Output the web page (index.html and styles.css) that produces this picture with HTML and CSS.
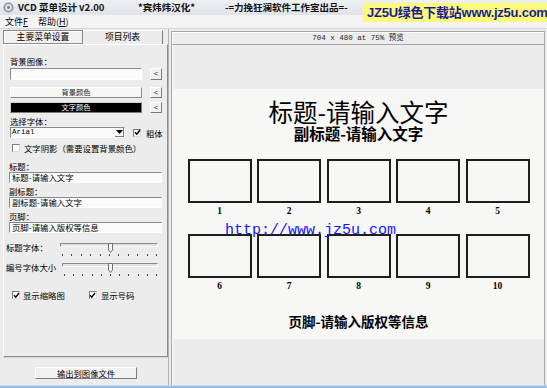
FILE: index.html
```html
<!DOCTYPE html>
<html>
<head>
<meta charset="utf-8">
<title>VCD 菜单设计 v2.00</title>
<link rel="stylesheet" href="styles.css">
</head>
<body>
<div class="window">
  <div class="titlebar">
    <svg class="app-icon" width="11" height="11" viewBox="0 0 11 11"><circle cx="5.5" cy="5.5" r="5" fill="#8e949b"/><circle cx="5.5" cy="5.5" r="3.4" fill="#dde1e5"/><circle cx="5.5" cy="5.5" r="1.3" fill="#666b71"/></svg>
    <span class="title">VCD 菜单设计 v2.00</span>
    <span class="credit1">*宾炜炜汉化*</span>
    <span class="credit2">-=力挽狂澜软件工作室出品=-</span>
  </div>
  <div class="menubar"><span>文件<u>F</u></span><span>帮助(<u>H</u>)</span></div>
  <div class="body">
    <div class="left">
      <div class="tabs"><div class="tab active">主要菜单设置</div><div class="tab">项目列表</div></div>
      <div class="tabpage">
        <div class="label">背景图像：</div>
        <div class="row r-img"><div class="field wide"></div><div class="pick">&lt;</div></div>
        <div class="row r-bg"><div class="colorbtn light">背景颜色</div><div class="pick">&lt;</div></div>
        <div class="row r-fg"><div class="colorbtn dark">文字颜色</div><div class="pick">&lt;</div></div>
        <div class="label l-font">选择字体：</div>
        <div class="row r-font">
          <div class="select"><span class="sel-text">Arial</span><span class="sel-arrow"><svg width="7" height="4" viewBox="0 0 7 4"><path d="M0 0 H7 L3.5 4 Z" fill="#000"/></svg></span></div>
          <div class="check c-bold"><span class="box"><svg width="7" height="7" viewBox="0 0 7 7"><path d="M1 3.2 L2.8 5.2 L6 1" stroke="#000" stroke-width="1.4" fill="none"/></svg></span><span>粗体</span></div>
        </div>
        <div class="row r-shadow"><div class="check"><span class="box"></span><span>文字阴影（需要设置背景颜色）</span></div></div>
        <div class="label l-title">标题：</div>
        <div class="field text">标题-请输入文字</div>
        <div class="label l-sub">副标题：</div>
        <div class="field text">副标题-请输入文字</div>
        <div class="label l-sub">页脚：</div>
        <div class="field text">页脚-请输入版权等信息</div>
        <div class="slider-row s1">
          <span class="s-label">标题字体：</span>
          <div class="slider">
            <div class="track"></div>
            <svg class="thumb" width="5" height="10" viewBox="0 0 5 10"><path d="M0.5 0.5 H4.5 V7 L2.5 9.5 L0.5 7 Z" fill="#f4f4f4" stroke="#6f6f6f"/></svg>
            <div class="ticks"><i></i><i></i><i></i><i></i><i></i><i></i><i></i><i></i><i></i><i></i><i></i></div>
          </div>
        </div>
        <div class="slider-row s2">
          <span class="s-label">编号字体大小</span>
          <div class="slider">
            <div class="track"></div>
            <svg class="thumb" width="5" height="10" viewBox="0 0 5 10"><path d="M0.5 0.5 H4.5 V7 L2.5 9.5 L0.5 7 Z" fill="#f4f4f4" stroke="#6f6f6f"/></svg>
            <div class="ticks"><i></i><i></i><i></i><i></i><i></i><i></i><i></i><i></i><i></i><i></i><i></i></div>
          </div>
        </div>
        <div class="row r-checks">
          <div class="check c-thumb"><span class="box"><svg width="7" height="7" viewBox="0 0 7 7"><path d="M1 3.2 L2.8 5.2 L6 1" stroke="#000" stroke-width="1.4" fill="none"/></svg></span><span>显示缩略图</span></div>
          <div class="check c-num"><span class="box"><svg width="7" height="7" viewBox="0 0 7 7"><path d="M1 3.2 L2.8 5.2 L6 1" stroke="#000" stroke-width="1.4" fill="none"/></svg></span><span>显示号码</span></div>
        </div>
      </div>
      <div class="export"><div class="export-btn">输出到图像文件</div></div>
    </div>
    <div class="right">
      <div class="preview-head">704 x 480 at 75% 预览</div>
      <div class="preview">
        <div class="pv-top"></div>
        <div class="canvas">
          <div class="big-title">标题-请输入文字</div>
          <div class="sub-title">副标题-请输入文字</div>
          <div class="grid">
            <div class="cell"><div class="frame"></div><div class="num">1</div></div>
            <div class="cell"><div class="frame"></div><div class="num">2</div></div>
            <div class="cell"><div class="frame"></div><div class="num">3</div></div>
            <div class="cell"><div class="frame"></div><div class="num">4</div></div>
            <div class="cell"><div class="frame"></div><div class="num">5</div></div>
            <div class="cell"><div class="frame"></div><div class="num">6</div></div>
            <div class="cell"><div class="frame"></div><div class="num">7</div></div>
            <div class="cell"><div class="frame"></div><div class="num">8</div></div>
            <div class="cell"><div class="frame"></div><div class="num">9</div></div>
            <div class="cell"><div class="frame"></div><div class="num">10</div></div>
          </div>
          <div class="footer-text">页脚-请输入版权等信息</div>
        </div>
        <div class="pv-bottom"></div>
      </div>
    </div>
  </div>
  <div class="bottom-edge"></div>
  <div class="watermark">JZ5U绿色下载站www.jz5u.com</div>
  <div class="url-mark">http://www.jz5u.com</div>
</div>
</body>
</html>
```
FILE: styles.css
```css
* { box-sizing: border-box; }
html, body { margin: 0; padding: 0; }
body {
  width: 547px;
  height: 388px;
  overflow: hidden;
  background: #ececec;
  font-family: "Noto Sans CJK SC", sans-serif;
  font-size: 8.4px;
  color: #000;
}
.window {
  position: relative;
  width: 547px;
  height: 388px;
  display: flex;
  flex-direction: column;
}
/* title bar */
.titlebar {
  height: 15px;
  display: flex;
  align-items: center;
  background: linear-gradient(#eef1f4, #dfe3e8);
  font-weight: bold;
  font-size: 9.5px;
  line-height: 15px;
  color: #111;
  white-space: nowrap;
}
.app-icon { margin-left: 3px; margin-right: 4px; flex: none; }
.title { width: 120px; flex: none; }
.credit1 { width: 87px; flex: none; }
.credit2 { flex: none; }
.watermark {
  position: absolute;
  left: 363px;
  top: 3px;
  width: 184px;
  height: 19px;
  padding-left: 4px;
  background: #fbfb78;
  color: #1b1b9a;
  font: bold 13px "Liberation Sans", "Noto Sans CJK SC", sans-serif;
  letter-spacing: -0.25px;
  line-height: 19px;
  white-space: nowrap;
}
/* menu */
.menubar {
  height: 14px;
  display: flex;
  align-items: center;
  gap: 10px;
  padding-left: 5px;
  background: #f4f4f4;
  border-bottom: 1px solid #d6d6d6;
  font-size: 9px;
  line-height: 13px;
}
.menubar u { text-decoration: underline; }
/* body */
.body { height: 356px; display: flex; }
.left { width: 168px; flex: none; display: flex; flex-direction: column; }
.tabs { margin-top: 1px; height: 14px; display: flex; padding-left: 3px; }
.tab {
  width: 80px;
  font-size: 8.8px;
  line-height: 12px;
  text-align: center;
  border-top: 1px solid #fff;
  border-right: 1px solid #7c7c7c;
}
.tab.active {
  border: 1px solid #8a8a8a;
  box-shadow: inset 1px 1px #fff;
  background: #f1f1f1;
}
.tabpage {
  height: 313px;
  width: 165px;
  margin-left: 3px;
  border-left: 1px solid #fff;
  border-top: 1px solid #fff;
  border-right: 1px solid #8c8c8c;
  border-bottom: 1px solid #8c8c8c;
  box-shadow: 1px 1px #d4d4d4;
  padding: 10px 0 0 6px;
  display: flex;
  flex-direction: column;
  align-items: flex-start;
}
.label { line-height: 12px; white-space: nowrap; }
.row { display: flex; align-items: center; }
.r-img { margin-top: 1px; height: 12px; }
.field {
  background: #fbfbfb;
  border-top: 1px solid #8a8a8a;
  border-left: 1px solid #8a8a8a;
  border-right: 1px solid #fff;
  border-bottom: 1px solid #fff;
}
.field.wide { width: 132px; height: 12px; }
.pick {
  margin-left: 8px;
  width: 12px;
  height: 100%;
  background: #f0f0f0;
  border-top: 1px solid #fff;
  border-left: 1px solid #fff;
  border-right: 1px solid #7a7a7a;
  border-bottom: 1px solid #7a7a7a;
  font: 8px "Liberation Sans", sans-serif;
  line-height: 9px;
  text-align: center;
  color: #333;
}
.r-bg { margin-top: 7px; height: 11px; }
.r-fg { margin-top: 4px; height: 11px; }
.colorbtn {
  width: 132px;
  height: 11px;
  font-size: 7.3px;
  line-height: 9px;
  text-align: center;
  border-top: 1px solid #fff;
  border-left: 1px solid #fff;
  border-right: 1px solid #8a8a8a;
  border-bottom: 1px solid #8a8a8a;
}
.colorbtn.light { background: #f7f7f7; color: #222; }
.colorbtn.dark { background: #000; color: #fff; border-color: #cfcfcf #7a7a7a #7a7a7a #cfcfcf; }
.l-font { margin-top: 3px; line-height: 11px; }
.r-font { height: 11px; }
.select {
  width: 115px;
  height: 11px;
  display: flex;
  justify-content: space-between;
  background: #fbfbfb;
  border-top: 1px solid #8a8a8a;
  border-left: 1px solid #8a8a8a;
  border-right: 1px solid #fff;
  border-bottom: 1px solid #fff;
}
.sel-text { font: 7.5px "Liberation Mono", monospace; line-height: 9px; padding-left: 1px; }
.sel-arrow {
  width: 9px;
  height: 9px;
  display: flex;
  align-items: center;
  justify-content: center;
  background: #f4f4f4;
  border-right: 1px solid #7a7a7a;
  border-bottom: 1px solid #7a7a7a;
}
.check { display: flex; align-items: center; white-space: nowrap; }
.box {
  width: 8px;
  height: 8px;
  margin-right: 4px;
  display: flex;
  align-items: center;
  justify-content: center;
  background: #fff;
  border-top: 1px solid #7a7a7a;
  border-left: 1px solid #7a7a7a;
  border-right: 1px solid #dcdcdc;
  border-bottom: 1px solid #dcdcdc;
}
.box svg { flex: none; }
.c-bold { margin-left: 8px; }
.c-bold .box { margin-right: 5px; }
.r-shadow { margin-top: 4px; height: 12px; padding-left: 2px; }
.r-shadow .box { margin-right: 4px; }
.l-title { margin-top: 6px; margin-left: -1px; }
.l-sub { margin-top: 2px; margin-left: -1px; }
.field.text {
  width: 153px;
  height: 11px;
  margin-left: -1px;
  padding-left: 2px;
  line-height: 9px;
  white-space: nowrap;
}
.slider-row {
  display: flex;
  align-items: flex-start;
  height: 20px;
  margin-left: -4px;
}
.s1 { margin-top: 8px; }
.s-label { line-height: 12px; white-space: nowrap; flex: none; }
.s1 .s-label { width: 54px; }
.s2 .s-label { width: 56px; }
.slider { position: relative; width: 98px; height: 16px; margin-top: 2px; }
.s2 .slider { width: 96px; }
.track {
  height: 4px;
  border-top: 1px solid #8a8a8a;
  border-left: 1px solid #8a8a8a;
  border-bottom: 1px solid #fff;
  border-right: 1px solid #fff;
  background: #e2e2e2;
}
.thumb { position: absolute; left: 48px; top: 0; }
.s2 .thumb { left: 46px; }
.ticks {
  margin-top: 7px;
  padding: 0 1px 0 2px;
  display: flex;
  justify-content: space-between;
}
.ticks i { display: block; width: 1px; height: 2px; background: #444; }
.r-checks { margin-top: 8px; height: 12px; padding-left: 2px; }
.c-thumb .box { margin-right: 3px; }
.c-num { margin-left: 24px; }
.c-num .box { margin-right: 4px; }
.export { height: 28px; padding: 10px 0 0 35px; }
.export-btn {
  width: 102px;
  height: 12px;
  background: #f2f2f2;
  border-top: 1px solid #fff;
  border-left: 1px solid #fff;
  border-right: 1px solid #7a7a7a;
  border-bottom: 1px solid #7a7a7a;
  font-size: 8.3px;
  line-height: 10px;
  text-align: center;
}
/* right */
.right {
  flex: 1;
  display: flex;
  flex-direction: column;
  padding: 2px 2px 0 3px;
  box-shadow: inset 1px 0 #b4b4b4;
}
.preview-head {
  height: 14px;
  flex: none;
  border: 1px solid #a8a8a8;
  box-shadow: inset 1px 1px #fff;
  font: 7.5px "Liberation Mono", "Noto Sans CJK SC", monospace;
  line-height: 12px;
  text-align: center;
  color: #222;
}
.preview {
  flex: 1;
  display: flex;
  flex-direction: column;
  border-left: 1px solid #a8a8a8;
  border-right: 1px solid #a8a8a8;
  box-shadow: inset 1px 0 #fff;
}
.pv-top { height: 44px; flex: none; }
.canvas {
  height: 250px;
  flex: none;
  background: #f7f8f6;
  display: flex;
  flex-direction: column;
  align-items: center;
  padding: 9px 0 0 1px;
}
.big-title { font-size: 24.5px; line-height: 27px; white-space: nowrap; }
.sub-title { font-size: 15.5px; font-weight: bold; line-height: 17px; white-space: nowrap; }
.grid {
  margin-top: 17px;
  display: grid;
  grid-template-columns: repeat(5, 64px);
  column-gap: 5.5px;
  row-gap: 15px;
}
.frame { height: 44px; border: 2px solid #1e1e1e; }
.num {
  height: 16px;
  font: bold 9.5px "Liberation Serif", serif;
  line-height: 16px;
  text-align: center;
}
.footer-text { margin-top: 19px; font-size: 13.5px; font-weight: bold; line-height: 16px; white-space: nowrap; }
.pv-bottom { flex: 1; }
.bottom-edge { height: 3px; background: #94bfe2; border-top: 1px solid #c8d8e6; }
.url-mark {
  position: absolute;
  left: 225px;
  top: 222px;
  font: 15px "Liberation Mono", monospace;
  line-height: 17px;
  color: #1515ff;
  white-space: nowrap;
}
```
